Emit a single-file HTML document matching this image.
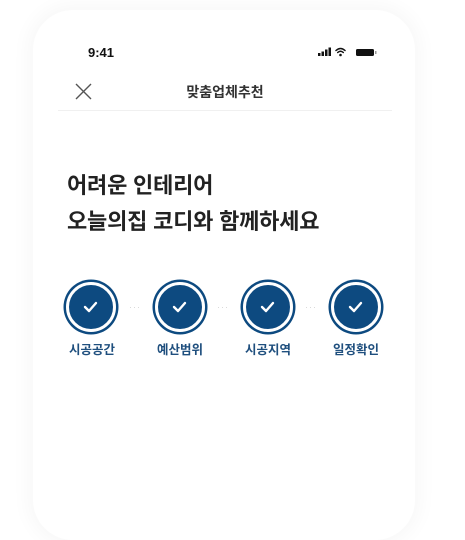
<!DOCTYPE html>
<html><head><meta charset="utf-8"><style>
html,body{margin:0;padding:0;width:465px;height:514px;overflow:hidden;background:#fff;font-family:"Liberation Sans","Noto Sans CJK KR",sans-serif;}
.frame{position:absolute;left:33px;top:10px;width:382px;height:530px;border-radius:40px;background:#fff;box-shadow:0 0 18px 6px rgba(0,0,0,0.03);}
.abs{position:absolute;}
.time{left:88px;top:45px;font-size:13px;font-weight:bold;color:#111;}
.title{left:0;width:450px;text-align:center;top:82px;font-size:14px;font-weight:bold;color:#333;}
.div{left:58px;top:110px;width:334px;height:1px;background:#f0f0f0;}
.h{left:67px;font-size:22px;font-weight:bold;color:#222;letter-spacing:-0.2px;}
.c{width:44px;height:44px;border-radius:50%;background:#0d4a80;border:3px solid #fff;box-shadow:0 0 0 2.5px #0d4a80;}
.lbl{font-size:12.5px;font-weight:bold;color:#1f4f7e;width:80px;text-align:center;top:339px;}
.dots{top:302px;font-size:9px;color:#d4d4d4;letter-spacing:1px;}
</style></head><body>
<div class="frame"></div>
<div class="abs time">9:41</div>
<svg class="abs" style="left:318px;top:47px" width="62" height="11" viewBox="0 0 62 11">
<rect x="0" y="6" width="2.5" height="3" fill="#111"/><rect x="3.5" y="4.5" width="2.5" height="4.5" fill="#111"/><rect x="7" y="2.5" width="2.5" height="6.5" fill="#111"/><rect x="10.5" y="0.5" width="2.5" height="8.5" fill="#111"/>
<g fill="none" stroke="#111" stroke-width="1.5" stroke-linecap="round"><path d="M18 3.5Q22.5 -0.5 27 3.5"/><path d="M19.7 5.5Q22.5 3 25.3 5.5"/></g><circle cx="22.5" cy="8" r="1.3" fill="#111"/>
<rect x="38" y="2" width="18" height="7" rx="1.5" fill="#111"/><rect x="57" y="4" width="1.5" height="3" fill="#999"/>
</svg>
<svg class="abs" style="left:75px;top:83px" width="17" height="17" viewBox="0 0 17 17"><path d="M1 1L16 16M16 1L1 16" stroke="#555" stroke-width="1.4"/></svg>
<div class="abs title">맞춤업체추천</div>
<div class="abs div"></div>
<div class="abs h" style="top:168px">어려운 인테리어</div>
<div class="abs h" style="top:204px">오늘의집 코디와 함께하세요</div>
<div class="abs c" style="left:66px;top:282px"></div>
<div class="abs c" style="left:155px;top:282px"></div>
<div class="abs c" style="left:243px;top:282px"></div>
<div class="abs c" style="left:331px;top:282px"></div>
<svg class="abs" style="left:0;top:0" width="465" height="514">
<g fill="none" stroke="#fff" stroke-width="2.4" stroke-linecap="round" stroke-linejoin="round">
<path d="M85 307l4 4 7-8"/><path d="M174 307l4 4 7-8"/><path d="M262 307l4 4 7-8"/><path d="M350 307l4 4 7-8"/>
</g></svg>
<div class="abs dots" style="left:129px">···</div>
<div class="abs dots" style="left:217px">···</div>
<div class="abs dots" style="left:305px">···</div>
<div class="abs lbl" style="left:52px">시공공간</div>
<div class="abs lbl" style="left:140px">예산범위</div>
<div class="abs lbl" style="left:228px">시공지역</div>
<div class="abs lbl" style="left:316px">일정확인</div>
</body></html>
